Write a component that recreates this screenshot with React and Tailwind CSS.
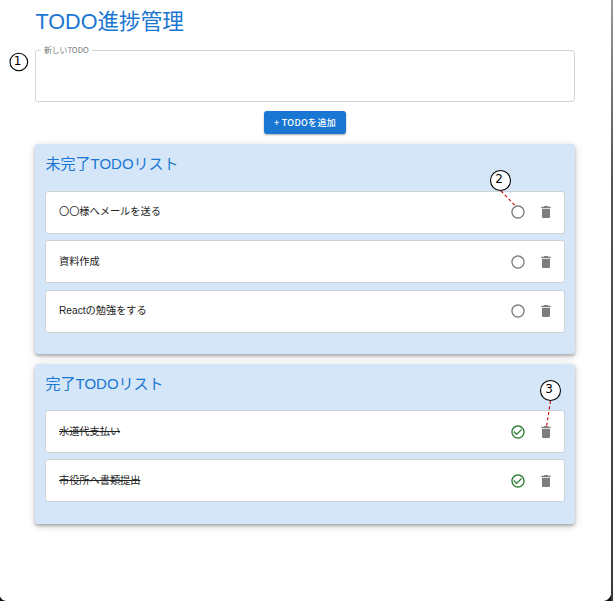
const FONT = "font-['Liberation_Sans','Noto_Sans_CJK_JP',sans-serif]";

function TrashIcon() {
  return (
    <svg viewBox="0 0 24 24" className="size-4 fill-[#7d7d7d]">
      <path d="M6 19c0 1.1.9 2 2 2h8c1.1 0 2-.9 2-2V7H6v12zM19 4h-3.5l-1-1h-5l-1 1H5v2h14V4z" />
    </svg>
  );
}

function OpenIcon() {
  return (
    <svg viewBox="0 0 24 24" className="size-4 fill-[#7d7d7d]">
      <path d="M12 2C6.48 2 2 6.48 2 12s4.48 10 10 10 10-4.48 10-10S17.52 2 12 2zm0 18c-4.42 0-8-3.58-8-8s3.58-8 8-8 8 3.58 8 8-3.58 8-8 8z" />
    </svg>
  );
}

function DoneIcon() {
  return (
    <svg viewBox="0 0 24 24" className="size-4 fill-[#2e7d32]">
      <path d="M16.59 7.58 10 14.17l-3.59-3.58L5 12l5 5 8-8zM12 2C6.48 2 2 6.48 2 12s4.48 10 10 10 10-4.48 10-10S17.52 2 12 2zm0 18c-4.42 0-8-3.58-8-8s3.58-8 8-8 8 3.58 8 8-3.58 8-8 8z" />
    </svg>
  );
}

function TodoItem({ text, done }) {
  return (
    <li className="flex h-[43px] items-center rounded-[3px] border border-[#d0d3d6] bg-white pr-[10px] pl-[13px]">
      <span className={`flex-1 text-[10.2px] leading-4 text-[#222] ${done ? "line-through" : ""}`}>{text}</span>
      <button className="mr-3">{done ? <DoneIcon /> : <OpenIcon />}</button>
      <button>
        <TrashIcon />
      </button>
    </li>
  );
}

function TodoPanel({ title, items, done, className, listClassName }) {
  return (
    <section
      className={`rounded-[3px] bg-[#d5e6f8] px-[10px] shadow-[0_2px_3px_rgba(0,0,0,0.25),0_2px_8px_rgba(0,0,0,0.16)] ${className}`}
    >
      <h2 className="pt-[8px] pl-[0.5px] text-[15px] leading-6 text-[#1976d2]">{title}</h2>
      <ul className={`flex flex-col gap-[6.4px] ${listClassName}`}>
        {items.map((t) => (
          <TodoItem key={t} text={t} done={done} />
        ))}
      </ul>
    </section>
  );
}

function Callouts() {
  const marks = [
    { n: "1", x: 18.8, y: 62, r: 8.8, tx: 17.5, ty: 65.2 },
    { n: "2", x: 500.5, y: 180.5, r: 10, tx: 499, ty: 183.3 },
    { n: "3", x: 550.5, y: 390.5, r: 10, tx: 549, ty: 393.3 },
  ];
  return (
    <svg viewBox="0 0 613 601" className="pointer-events-none absolute inset-0 h-[601px] w-[613px]">
      <path d="M501 191 L516 206.5 M550.5 401 L546.5 427" fill="none" stroke="#d00000" strokeWidth="1.1" strokeDasharray="3 2.5" />
      {marks.map((m) => (
        <g key={m.n}>
          <circle cx={m.x} cy={m.y} r={m.r} fill="#fff" stroke="#000" strokeWidth="1.1" />
          <text x={m.tx} y={m.ty} textAnchor="middle" className="fill-black font-['DejaVu_Sans',sans-serif] text-[12px]">
            {m.n}
          </text>
        </g>
      ))}
      <path d="M0 596.5 Q1.5 600 5.5 601 H0 Z M611 595 Q609 600 604 601 H611 Z" fill="#111" />
    </svg>
  );
}

export default function App() {
  return (
    <div className={`relative flex h-[601px] w-[613px] overflow-hidden bg-white ${FONT}`}>
      <main className="flex w-[611px] flex-col pr-[36px] pl-[35px]">
        <h1 className="pt-[7px] pl-[0.5px] text-[21.6px] leading-[30px] text-[#1976d2]">TODO進捗管理</h1>
        <fieldset className="mt-[7px] h-[58px] rounded-[3px] border border-[#d4d4d4] px-[5px]">
          <legend className="px-[3px] font-['Noto_Sans_CJK_JP',sans-serif] text-[7.8px] leading-[12px] text-[#777]">新しいTODO</legend>
          <textarea aria-label="新しいTODO" className="h-8 w-full resize-none outline-none" />
        </fieldset>
        <button className="mt-[9px] h-[23px] w-[82px] self-center rounded-[3px] bg-[#1976d2] font-['Noto_Sans_CJK_JP',sans-serif] text-[9px] leading-[23px] font-medium tracking-[0.3px] whitespace-nowrap text-white shadow-[0_1px_2px_rgba(0,0,0,0.35)]">
          + TODOを追加
        </button>
        <TodoPanel
          className="mt-[10px] h-[210px]"
          listClassName="mt-[14.9px]"
          title="未完了TODOリスト"
          items={["〇〇様へメールを送る", "資料作成", "Reactの勉強をする"]}
        />
        <TodoPanel
          className="mt-[10px] h-[160px]"
          listClassName="mt-[14px]"
          title="完了TODOリスト"
          items={["水道代支払い", "市役所へ書類提出"]}
          done
        />
      </main>
      <div className="w-[2px] bg-linear-to-b from-[#9a9a9a] via-[#55555a] via-30% to-[#3a3a35]" />
      <Callouts />
    </div>
  );
}
